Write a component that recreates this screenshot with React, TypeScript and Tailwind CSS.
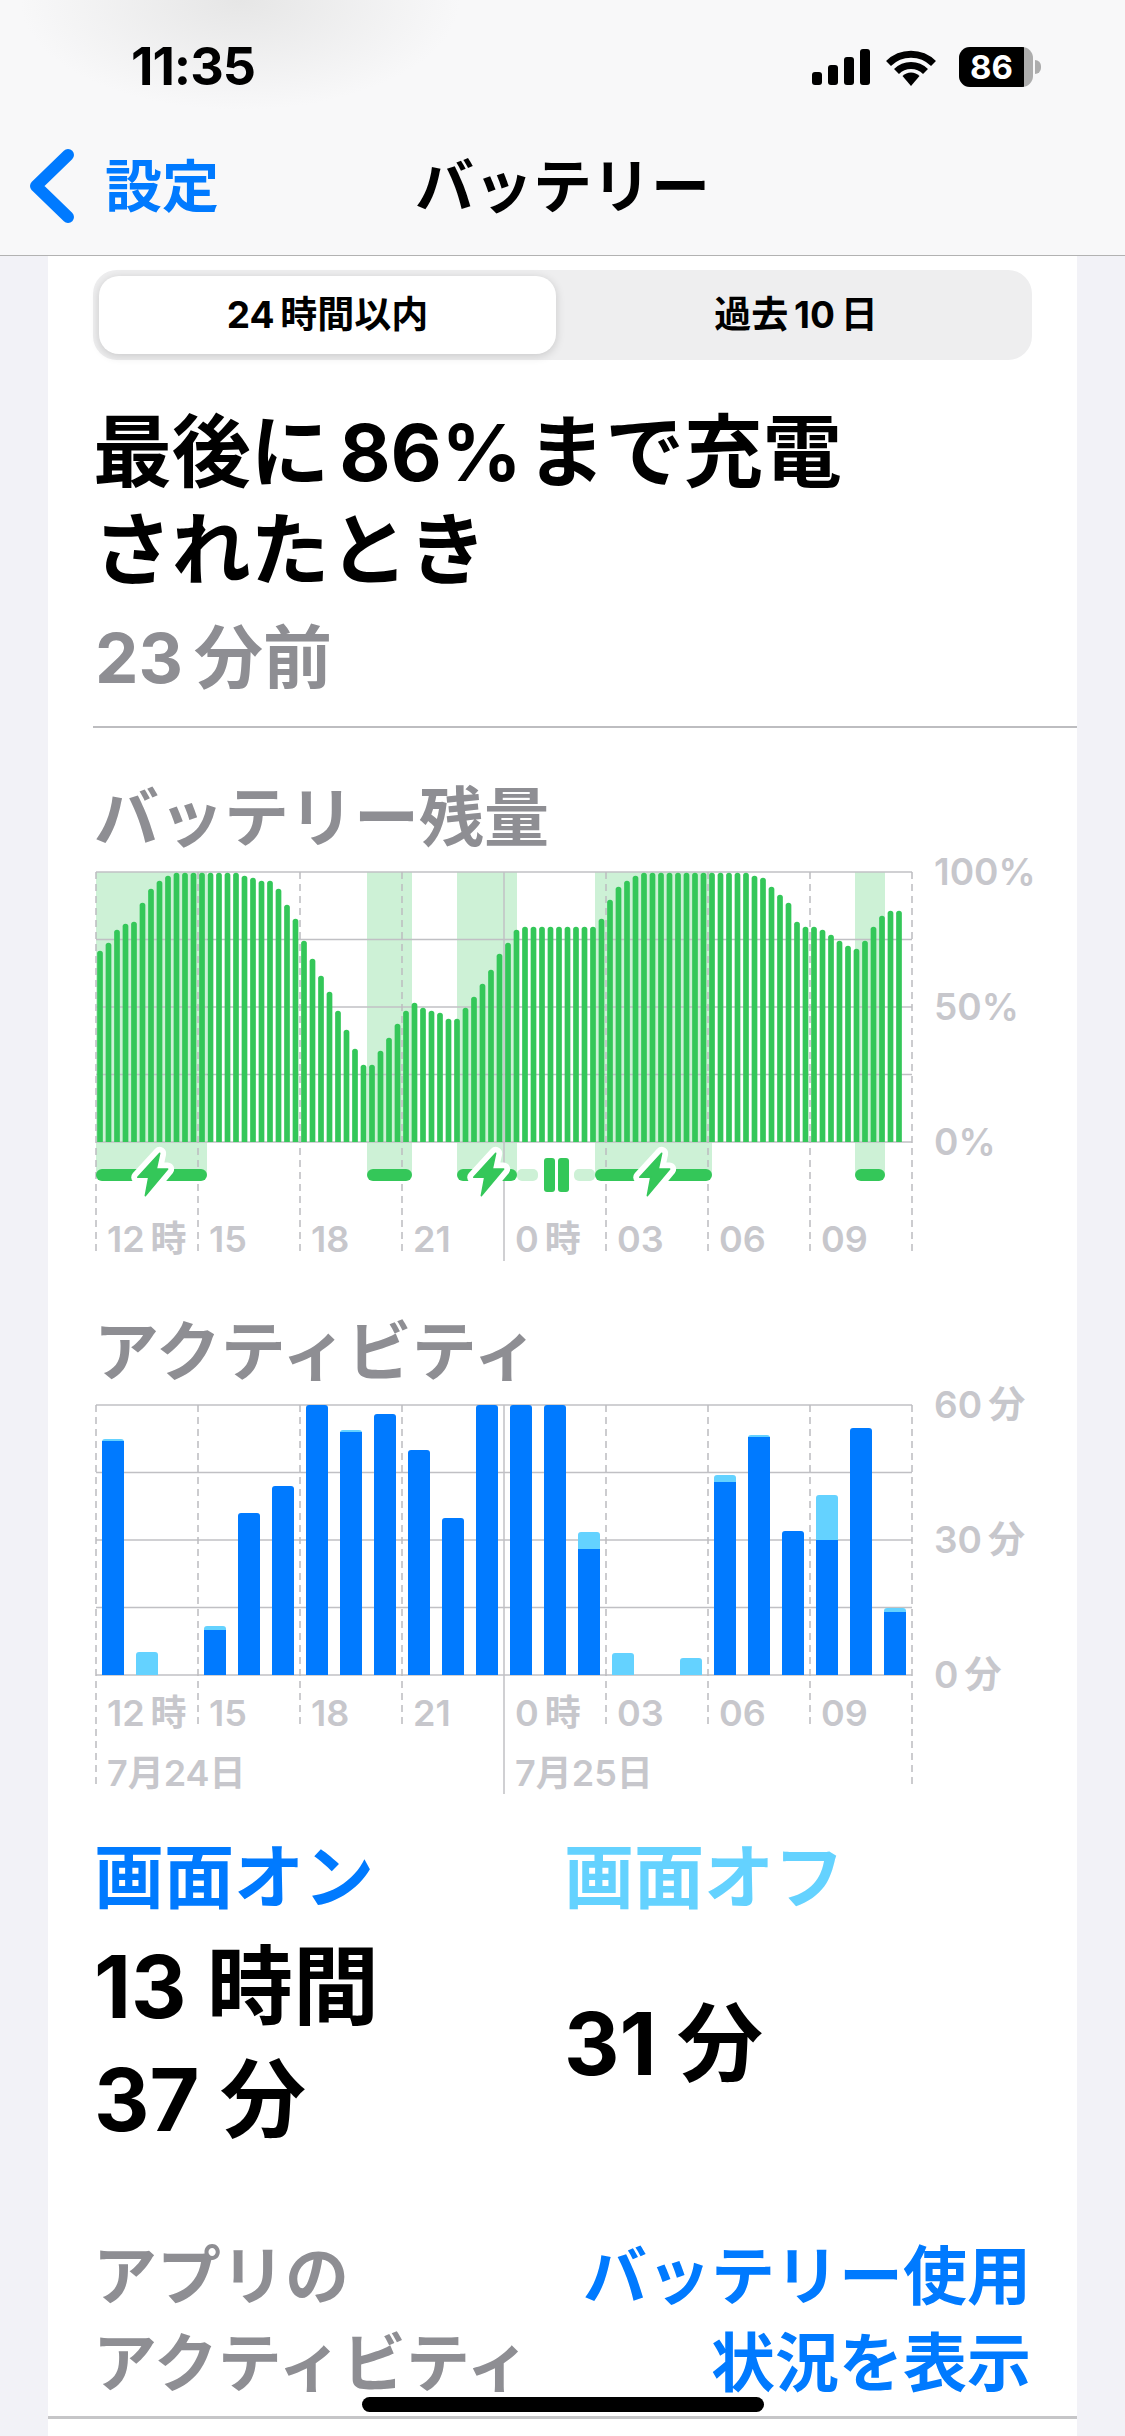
const batteryTops = [
  568, 544, 505, 487, 481, 424, 382, 358, 343, 334, 334, 334, 334, 334, 334, 334, 334, 343, 349, 358,
  358, 382, 430, 472, 538, 592, 643, 691, 748, 805, 862, 910, 910, 868, 829, 787, 748, 724, 739, 748,
  754, 772, 772, 739, 706, 667, 625, 577, 544, 505, 496, 496, 496, 496, 496, 496, 496, 496, 496, 472,
  415, 376, 358, 343, 334, 334, 334, 334, 334, 334, 334, 334, 334, 334, 334, 334, 334, 343, 349, 376,
  400, 424, 481, 496, 496, 505, 520, 538, 553, 562, 538, 496, 463, 448, 448,
];

// [off-screen top, on-screen top] in crop px, 1122 is the baseline
const activity: [number | null, number | null][] = [
  [414, 420], [1053, null], [null, null], [975, 987], [null, 636], [null, 555], [null, 312], [387, 393],
  [null, 339], [null, 447], [null, 651], [null, 312], [null, 312], [null, 312], [693, 744], [1056, null],
  [null, null], [1071, null], [522, 543], [402, 408], [null, 690], [582, 717], [null, 381], [921, 933],
];

const charging = [
  [0, 111],
  [271, 316],
  [361, 421],
  [499, 616],
  [759, 789],
];

const hourLabels = ['12\u2009時', '15', '18', '21', '0\u2009時', '03', '06', '09'];

function topRounded(x: number, y: number, w: number, bottom: number, r: number) {
  return `M${x} ${bottom}V${y + r}Q${x} ${y} ${x + r} ${y}H${x + w - r}Q${x + w} ${y} ${x + w} ${y + r}V${bottom}Z`;
}

function Grid({ dashEnd, longEnd }: { dashEnd: number; longEnd: number }) {
  return (
    <>
      {[0, 67.5, 135, 202.5, 270].map((y) => (
        <line key={y} x1={0} x2={816} y1={y} y2={y} stroke="#c0c0c4" strokeWidth={1.5} />
      ))}
      {[0, 1, 2, 3, 4, 5, 6, 7, 8].map((i) =>
        i === 4 ? (
          <line key={i} x1={408} x2={408} y1={0} y2={longEnd + 5} stroke="#c0c0c4" strokeWidth={1.5} />
        ) : (
          <line
            key={i}
            x1={i * 102}
            x2={i * 102}
            y1={0}
            y2={i === 0 || i === 8 ? longEnd : dashEnd}
            stroke="#bcbcc0"
            strokeWidth={1.5}
            strokeDasharray="7 5"
          />
        )
      )}
    </>
  );
}

function Bolt({ x }: { x: number }) {
  const d = 'M7.7 -20.7L-14.3 3.3H-3.3L-6.7 21.7L15.7 -5H4.3Z';
  return (
    <g transform={`translate(${x} 302)`}>
      <path d={d} fill="#fff" stroke="#fff" strokeWidth={13} strokeLinejoin="round" />
      <path d={d} fill="#34c759" stroke="#34c759" strokeWidth={1.5} strokeLinejoin="round" />
    </g>
  );
}

function YLabels({ labels }: { labels: string[] }) {
  return (
    <div className="ml-[22px] -mt-[20px] flex h-[310px] flex-col justify-between text-[37px] leading-[40px] font-semibold text-[#c7c7cc]">
      {labels.map((l) => (
        <span key={l}>{l}</span>
      ))}
    </div>
  );
}

function HourLabels({ top }: { top: string }) {
  return (
    <div className={`absolute left-0 grid w-[816px] grid-cols-8 text-[36px] leading-[40px] font-semibold text-[#c7c7cc] ${top}`}>
      {hourLabels.map((l) => (
        <span key={l} className="pl-[11px]">
          {l}
        </span>
      ))}
    </div>
  );
}

function BatteryChart() {
  return (
    <div className="mt-[14px] ml-[48px] flex">
      <div className="relative h-[390px] w-[816px]">
        <svg width={816} height={390} className="overflow-visible">
          {charging.map(([a, b]) => (
            <rect key={a} x={a} y={0} width={b - a} height={303} fill="#cdf1d6" />
          ))}
          <Grid dashEnd={384} longEnd={384} />
          {batteryTops.map((t, i) => (
            <path
              key={i}
              d={topRounded(4 + 8.5 * i - 2.85, (t - 332) / 3, 5.7, 270, 2.85)}
              fill="#34c759"
            />
          ))}
          <rect x={421} y={297} width={21} height={12} rx={5} fill="#cdf1d6" />
          <rect x={478} y={297} width={21} height={12} rx={5} fill="#cdf1d6" />
          {charging.map(([a, b]) => (
            <rect key={a} x={a} y={297} width={b - a} height={12} rx={6} fill="#34c759" />
          ))}
          <rect x={448} y={286} width={11} height={34} rx={3} fill="#34c759" />
          <rect x={462} y={286} width={11} height={34} rx={3} fill="#34c759" />
          <Bolt x={56} />
          <Bolt x={392} />
          <Bolt x={558} />
        </svg>
        <HourLabels top="top-[347px]" />
      </div>
      <YLabels labels={['100%', '50%', '0%']} />
    </div>
  );
}

function ActivityChart() {
  return (
    <div className="mt-[15px] ml-[48px] flex">
      <div className="relative h-[389px] w-[816px]">
        <svg width={816} height={389} className="overflow-visible">
          <Grid dashEnd={324} longEnd={384} />
          {activity.map(([off, on], i) => {
            const x = 6 + 34 * i;
            return (
              <g key={i}>
                {off !== null && <path d={topRounded(x, (off - 312) / 3, 22, 270, 3)} fill="#64d2ff" />}
                {on !== null &&
                  (off !== null ? (
                    <rect x={x} y={(on - 312) / 3} width={22} height={270 - (on - 312) / 3} fill="#007aff" />
                  ) : (
                    <path d={topRounded(x, (on - 312) / 3, 22, 270, 3)} fill="#007aff" />
                  ))}
              </g>
            );
          })}
        </svg>
        <HourLabels top="top-[288px]" />
        <div className="absolute top-[348px] left-0 grid w-[816px] grid-cols-2 text-[36px] leading-[40px] font-semibold text-[#c7c7cc]">
          <span className="pl-[11px]">7月24日</span>
          <span className="pl-[11px]">7月25日</span>
        </div>
      </div>
      <YLabels labels={['60\u2009分', '30\u2009分', '0\u2009分']} />
    </div>
  );
}

export default function App() {
  return (
    <div className="relative h-[2436px] w-[1125px] overflow-hidden bg-[#f2f2f7] font-['Inter','Noto_Sans_CJK_JP',sans-serif] text-black">
      {/* Nav */}
      <header className="h-[256px] border-b border-[#b2b2b2] bg-[#f8f8f9] bg-[radial-gradient(ellipse_220px_110px_at_240px_0px,#e6e6e6,transparent)]">
        <div className="flex h-[134px] items-center justify-between pr-[84px] pl-[131px]">
          <span className="text-[52px] leading-none font-bold tracking-[-1px]">11:35</span>
          <div className="flex items-center">
            <svg width={58} height={36} viewBox="0 0 58 36" fill="#000">
              <rect x={0} y={23} width={10} height={13} rx={3} />
              <rect x={16} y={16} width={10} height={20} rx={3} />
              <rect x={32} y={8} width={10} height={28} rx={3} />
              <rect x={48} y={0} width={10} height={36} rx={3} />
            </svg>
            <svg width={50} height={37} viewBox="0 0 50 37" className="mr-[23px] ml-[16px]" fill="none" stroke="#000">
              <path d="M2.5 14.5A32 32 0 0 1 47.5 14.5" strokeWidth={7} />
              <path d="M10.5 22.5A20.500 20.500 0 0 1 39.500 22.500" strokeWidth={7} />
              <path d="M25 37L16.500 27A12 12 0 0 1 33.500 27Z" fill="#000" stroke="none" />
            </svg>
            <div className="flex items-center">
              <div className="flex h-[40px] w-[74px] overflow-hidden rounded-[11px] bg-[#adadad]">
                <div className="flex w-[65px] items-center justify-center bg-black text-[33px] leading-none font-bold text-white">
                  86
                </div>
              </div>
              <div className="ml-[2px] h-[14px] w-[6px] rounded-r-full bg-[#adadad]" />
            </div>
          </div>
        </div>
        <div className="grid h-[104px] grid-cols-[1fr_auto_1fr] items-center">
          <div className="flex items-center pl-[29px] text-[#007aff]">
            <svg width={46} height={74} viewBox="0 0 46 74" fill="none" stroke="#007aff" strokeWidth={12} strokeLinecap="round" strokeLinejoin="round">
              <path d="M39 6L7 37L39 68" />
            </svg>
            <span className="ml-[30px] text-[57px] leading-none font-semibold">設定</span>
          </div>
          <span className="text-[59px] leading-none font-bold">バッテリー</span>
          <div />
        </div>
      </header>

      <main className="mx-[48px] bg-white pt-[14px] pb-[40px]">
        {/* Range switch */}
        <div className="mx-[45px] flex h-[90px] rounded-[24px] bg-[#eeeeef] p-[6px] text-[37px] font-bold">
          <div className="flex h-[78px] w-[457px] items-center justify-center rounded-[20px] bg-white shadow-[0_2px_10px_rgba(0,0,0,0.16)]">
            24{'\u2009'}時間以内
          </div>
          <div className="flex h-[78px] flex-1 items-center justify-center pl-[10px]">過去{'\u2009'}10{'\u2009'}日</div>
        </div>

        {/* Last charged */}
        <h1 className="mt-[43px] ml-[45px] text-[79px] leading-[98px] font-bold tracking-[-0.25px]">
          最後に<span className="ml-[10px]">86%</span>
          <span className="ml-[5px]">まで充電</span>
          <br />
          されたとき
        </h1>
        <p className="mt-[11px] ml-[47px] text-[69px] leading-[96px] font-bold text-[#8e8e93]">23{'\u2009'}分前</p>
        <div className="mt-[20px] ml-[45px] h-[2px] bg-[#bdbdc0]" />

        {/* Battery level */}
        <h2 className="mt-[50px] ml-[46px] text-[65px] leading-[80px] font-bold text-[#8e8e93]">バッテリー残量</h2>
        <BatteryChart />

        {/* Activity */}
        <h2 className="mt-[50px] ml-[46px] -mb-[2px] text-[65px] leading-[80px] font-bold text-[#8e8e93]">アクティビティ</h2>
        <ActivityChart />

        {/* Screen on/off totals */}
        <div className="mt-[39px] ml-[46px] grid grid-cols-[470px_1fr] font-bold">
          <div className="text-[70px] leading-[90px] text-[#007aff]">画面オン</div>
          <div className="text-[70px] leading-[90px] text-[#64d2ff]">画面オフ</div>
          <div className="mt-[8px] text-[86px] leading-[113px]">
            13 時間
            <br />
            37 分
          </div>
          <div className="mt-[8px] flex items-center text-[86px] leading-[113px]">31 分</div>
        </div>

        {/* App activity header */}
        <div className="mt-[75px] flex justify-between pr-[46px] pl-[45px] text-[64px] leading-[87px] font-bold">
          <div className="text-[#8e8e93]">
            アプリの
            <br />
            アクティビティ
          </div>
          <div className="text-right text-[#007aff]">
            バッテリー使用
            <br />
            状況を表示
          </div>
        </div>
        <div className="mt-[10px] h-[3px] bg-[#c6c6c8]" />
      </main>

      <div className="absolute top-[2397px] left-[362px] h-[15px] w-[402px] rounded-full bg-black" />
    </div>
  );
}
